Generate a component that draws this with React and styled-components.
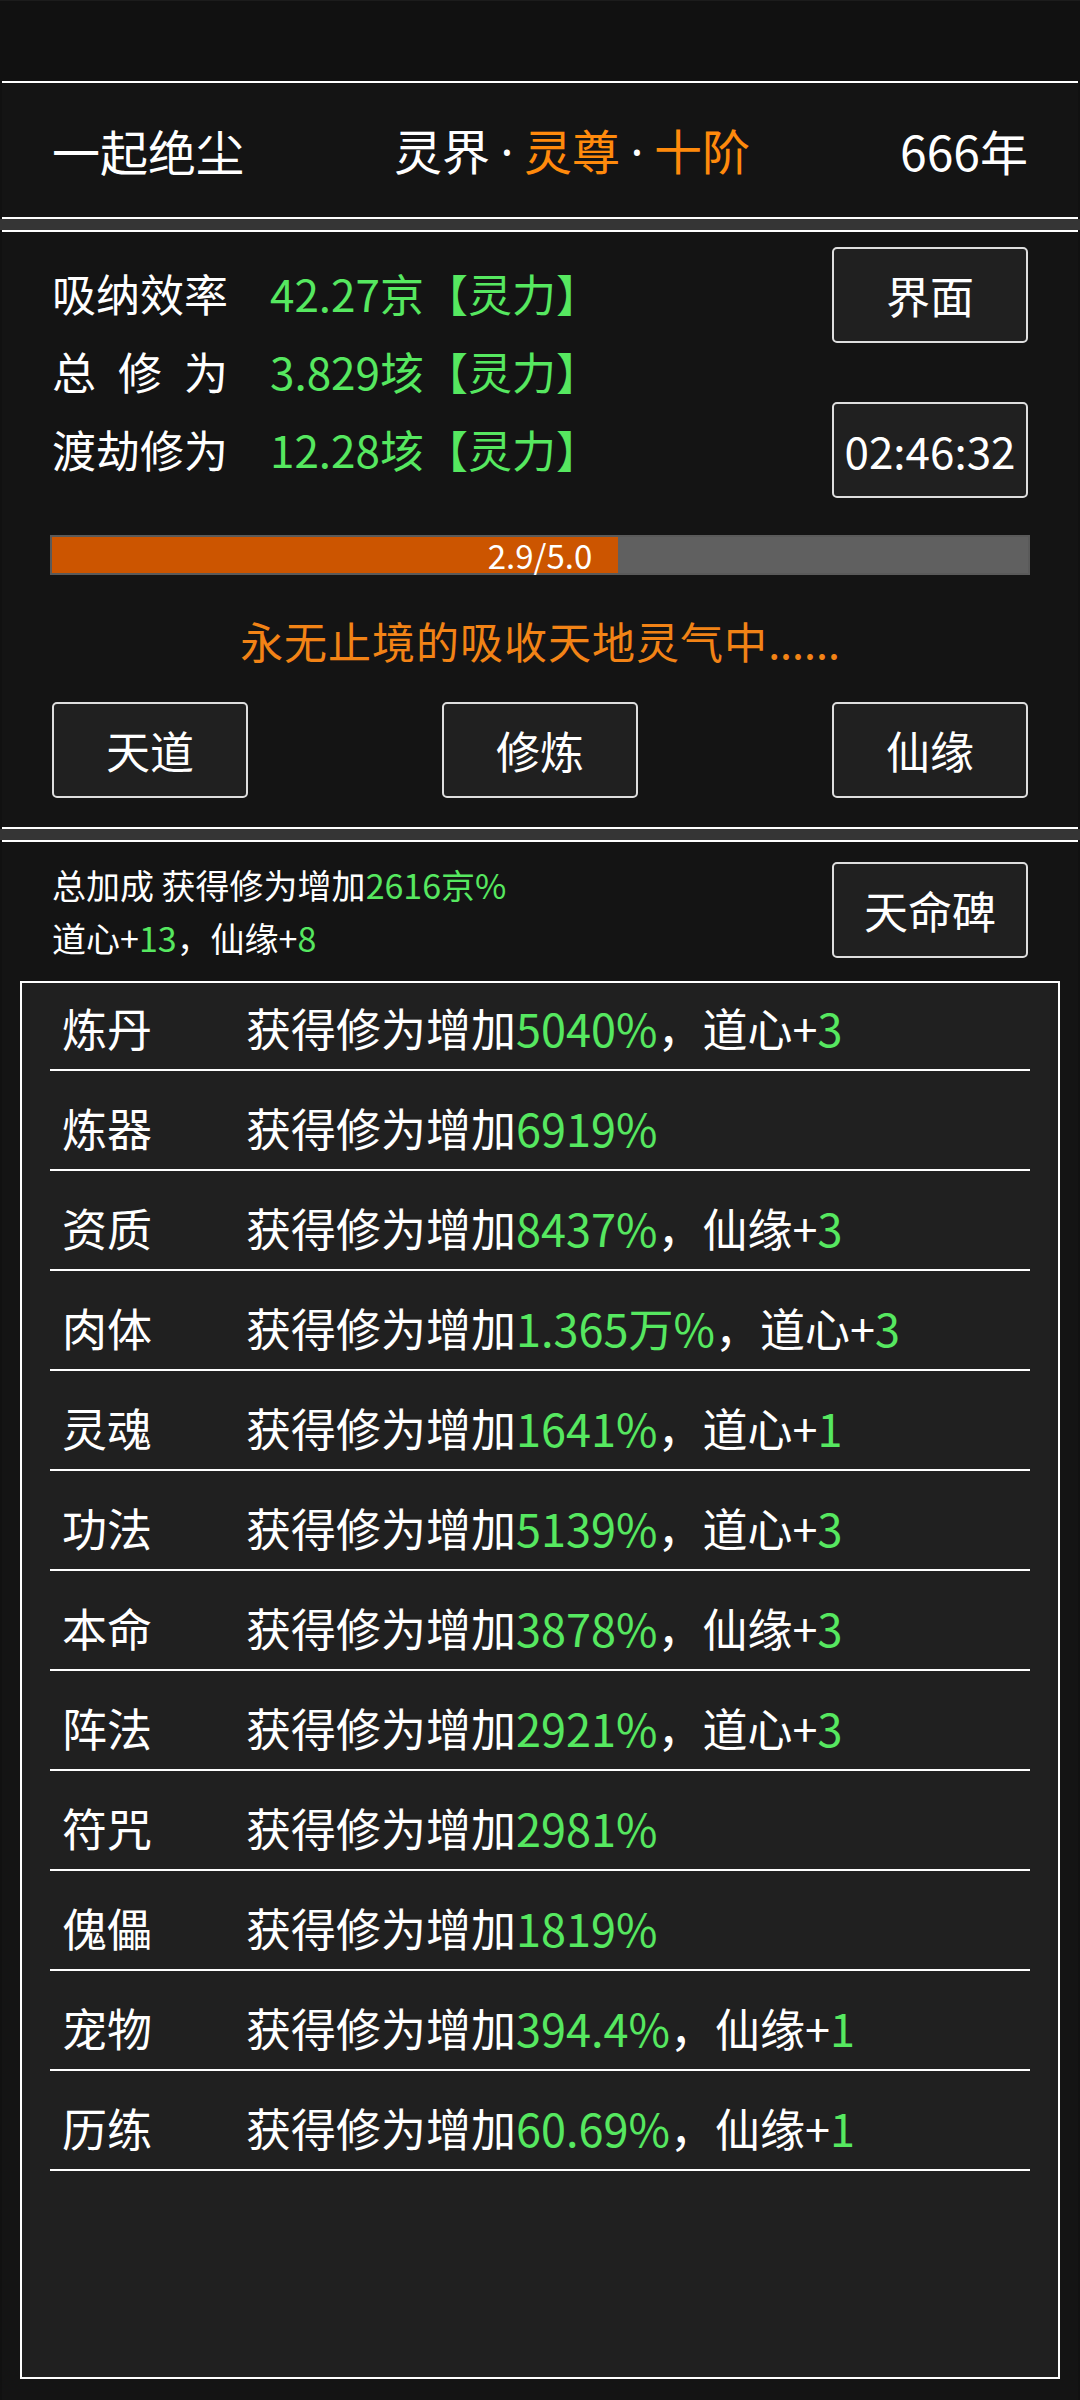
import React from "react";
import styled, { createGlobalStyle } from "styled-components";

const GlobalStyle = createGlobalStyle`
  html, body {
    margin: 0;
    padding: 0;
    background: #111111;
  }
  body {
    font-family: "Noto Sans CJK SC", "Noto Sans", sans-serif;
    color: #ffffff;
  }
  * { box-sizing: border-box; }
`;

const Screen = styled.div`
  width: 1080px;
  height: 2400px;
  overflow: hidden;
  display: flex;
  flex-direction: column;
  background: #111111;
`;

const StatusArea = styled.div`
  height: 81px;
  flex-shrink: 0;
  border-top: 1px solid #1c1c1c;
`;

const Band = styled.div`
  height: 11px;
  flex-shrink: 0;
  background: #353535;
`;

const Panel = styled.section`
  margin: 0 2px;
  background: #141414;
  border-top: 2px solid #ffffff;
  border-bottom: ${(p) => (p.$open ? "none" : "2px solid #ffffff")};
  padding: ${(p) => p.$pad || "0 50px"};
  flex-shrink: 0;
  ${(p) => (p.$grow ? "flex: 1; display: flex; flex-direction: column; min-height: 0;" : "")}
`;

const HeaderRow = styled.div`
  height: 134px;
  display: flex;
  align-items: center;
  justify-content: space-between;
  font-size: 48px;
  line-height: 1;
  white-space: nowrap;
`;

const Dot = styled.span`
  display: inline-block;
  width: 34px;
  text-align: center;
  font-family: "Noto Sans", sans-serif;
  color: #ffffff;
`;

const Accent = styled.span`
  color: #ff8a0c;
`;

const Green = styled.span`
  color: #56e860;
`;

const TopSection = styled.div`
  display: flex;
  justify-content: space-between;
  align-items: flex-start;
  height: ${(p) => p.$h || "auto"};
`;

const Stats = styled.div`
  padding-top: 22px;
  display: flex;
  flex-direction: column;
`;

const StatRow = styled.div`
  height: 78px;
  display: flex;
  align-items: center;
  font-size: 44px;
  white-space: nowrap;
`;

const StatLabel = styled.span`
  display: inline-block;
  width: 176px;
  margin-right: 42px;
  text-align: justify;
  text-align-last: justify;
  color: #ffffff;
`;

const ButtonColumn = styled.div`
  padding-top: ${(p) => p.$top || "15px"};
  display: flex;
  flex-direction: column;
  gap: 59px;
`;

const Button = styled.button`
  width: 196px;
  height: 96px;
  padding: 0;
  border: 2px solid #dedede;
  border-radius: 5px;
  background: #202020;
  color: #ffffff;
  font-family: "Noto Sans CJK SC", "Noto Sans", sans-serif;
  font-size: 44px;
  line-height: 1;
  display: flex;
  align-items: center;
  justify-content: center;
  flex-shrink: 0;
`;

const Bar = styled.div`
  position: relative;
  margin: 37px -2px 0;
  height: 40px;
  border: 2px solid #5a5a5a;
  background: #606060;
`;

const BarFill = styled.div`
  height: 100%;
  background: #cc5500;
`;

const BarText = styled.div`
  position: absolute;
  inset: 0;
  display: flex;
  align-items: center;
  justify-content: center;
  font-size: 33px;
  line-height: 1;
  color: #ffffff;
`;

const Message = styled.div`
  margin-top: 35px;
  height: 60px;
  line-height: 60px;
  text-align: center;
  font-size: 43px;
  letter-spacing: 1px;
  color: #f28316;
  white-space: nowrap;
`;

const Ellipsis = styled.span`
  letter-spacing: 0;
`;

const ActionRow = styled.div`
  margin-top: 32px;
  padding-bottom: 29px;
  display: flex;
  justify-content: space-between;
`;

const Summary = styled.div`
  padding-top: 16px;
  font-size: 34px;
  line-height: 53px;
  white-space: nowrap;
`;

const ListBox = styled.div`
  flex: 1;
  margin: 17px -32px 0;
  border: 2px solid #ffffff;
  background: #202020;
  display: flex;
  flex-direction: column;
`;

const ListRow = styled.div`
  margin: 0 28px;
  padding: 35px 0 19px 12px;
  border-bottom: 2px solid #ffffff;
  display: flex;
  align-items: center;
  font-size: 45px;
  line-height: 44px;
  white-space: nowrap;
  &:first-child {
    padding-top: 23px;
  }
`;

const RowLabel = styled.span`
  width: 184px;
  flex-shrink: 0;
`;

const bonuses = [
  ["炼丹", "5040%", "道心", "3"],
  ["炼器", "6919%"],
  ["资质", "8437%", "仙缘", "3"],
  ["肉体", "1.365万%", "道心", "3"],
  ["灵魂", "1641%", "道心", "1"],
  ["功法", "5139%", "道心", "3"],
  ["本命", "3878%", "仙缘", "3"],
  ["阵法", "2921%", "道心", "3"],
  ["符咒", "2981%"],
  ["傀儡", "1819%"],
  ["宠物", "394.4%", "仙缘", "1"],
  ["历练", "60.69%", "仙缘", "1"],
];

const stats = [
  ["吸纳效率", "42.27京【灵力】"],
  ["总修为", "3.829垓【灵力】"],
  ["渡劫修为", "12.28垓【灵力】"],
];

export default function App() {
  const progress = 2.9 / 5.0;
  return (
    <>
      <GlobalStyle />
      <Screen>
        <StatusArea />
        <Panel>
          <HeaderRow>
            <span>一起绝尘</span>
            <span>
              灵界<Dot>·</Dot>
              <Accent>灵尊</Accent>
              <Dot>·</Dot>
              <Accent>十阶</Accent>
            </span>
            <span>666年</span>
          </HeaderRow>
        </Panel>
        <Band />
        <Panel>
          <TopSection $h="266px">
            <Stats>
              {stats.map(([label, value]) => (
                <StatRow key={label}>
                  <StatLabel>{label}</StatLabel>
                  <Green>{value}</Green>
                </StatRow>
              ))}
            </Stats>
            <ButtonColumn>
              <Button>界面</Button>
              <Button>02:46:32</Button>
            </ButtonColumn>
          </TopSection>
          <Bar>
            <BarFill style={{ width: `${progress * 100}%` }} />
            <BarText>2.9/5.0</BarText>
          </Bar>
          <Message>
            永无止境的吸收天地灵气中<Ellipsis>......</Ellipsis>
          </Message>
          <ActionRow>
            <Button>天道</Button>
            <Button>修炼</Button>
            <Button>仙缘</Button>
          </ActionRow>
        </Panel>
        <Band />
        <Panel $open $grow $pad="0 50px 21px">
          <TopSection>
            <Summary>
              <div>
                总加成 获得修为增加<Green>2616京%</Green>
              </div>
              <div>
                道心+<Green>13</Green>，仙缘+<Green>8</Green>
              </div>
            </Summary>
            <ButtonColumn $top="20px">
              <Button>天命碑</Button>
            </ButtonColumn>
          </TopSection>
          <ListBox>
            {bonuses.map(([name, pct, attr, n]) => (
              <ListRow key={name}>
                <RowLabel>{name}</RowLabel>
                <span>
                  获得修为增加<Green>{pct}</Green>
                  {attr ? (
                    <>
                      ，{attr}+<Green>{n}</Green>
                    </>
                  ) : null}
                </span>
              </ListRow>
            ))}
          </ListBox>
        </Panel>
      </Screen>
    </>
  );
}
